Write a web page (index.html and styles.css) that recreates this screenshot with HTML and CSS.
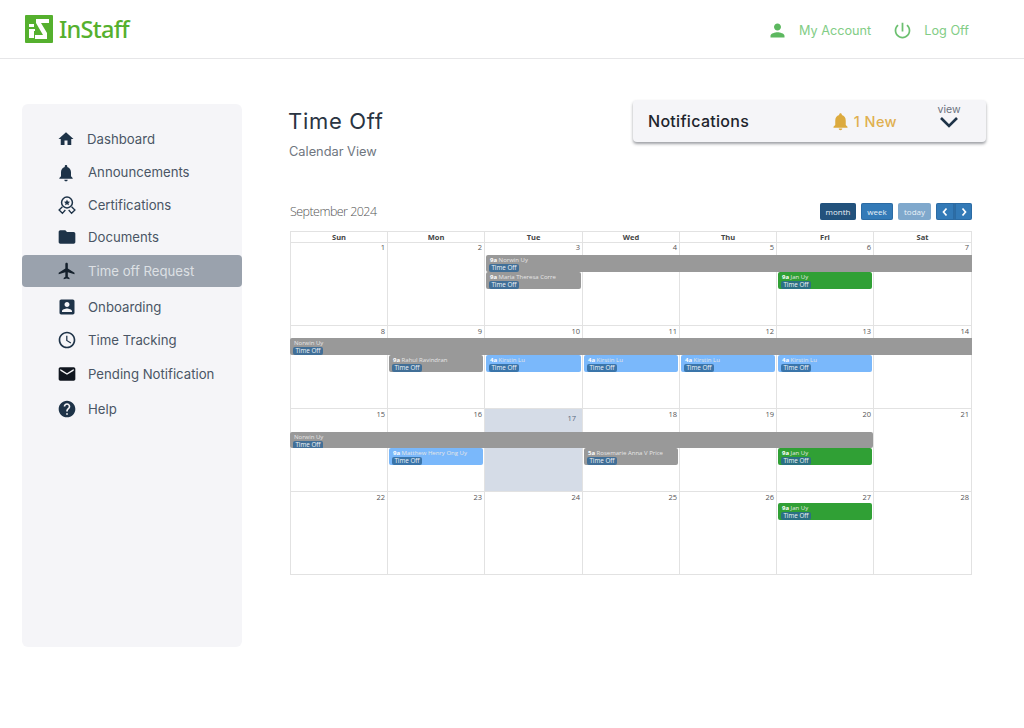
FILE: index.html
```html
<!DOCTYPE html>
<html lang="en">
<head>
<meta charset="utf-8">
<title>InStaff - Time Off</title>
<link rel="stylesheet" href="styles.css">
</head>
<body>
<header class="topbar">
  <a class="brand">
    <svg class="brand-mark" viewBox="0 0 28 28"><rect width="28" height="28" rx="1" fill="#55b02e"/><path d="M4 9h5v3H4zM4 14h6v2H9v7H4z" fill="#fff"/><path d="M11 4h13v4h-8l6 10v6H10v-4h8L11 8z" fill="#fff"/></svg>
    <span class="brand-name">InStaff</span>
  </a>
  <nav class="top-links">
    <a class="top-link"><svg class="top-icon person" viewBox="0 0 24 24"><path d="M12 12c2.210 0 4-1.790 4-4s-1.790-4-4-4-4 1.790-4 4 1.790 4 4 4zm0 2c-2.670 0-8 1.340-8 4v2h16v-2c0-2.660-5.330-4-8-4z"/></svg>My Account</a>
    <a class="top-link"><svg class="top-icon" viewBox="0 0 24 24"><path d="M13 3h-2v10h2V3zm4.830 2.170l-1.420 1.420C17.990 7.860 19 9.810 19 12c0 3.870-3.130 7-7 7s-7-3.130-7-7c0-2.190 1.010-4.140 2.580-5.420L6.170 5.170C4.230 6.820 3 9.260 3 12c0 4.970 4.030 9 9 9s9-4.030 9-9c0-2.740-1.230-5.180-3.170-6.830z"/></svg>Log Off</a>
  </nav>
</header>

<div class="page">
  <aside class="sidebar">
    <a class="nav-item"><svg class="nav-icon nav-icon-small" viewBox="0 0 24 24"><path d="M10 20v-6h4v6h5v-8h3L12 3 2 12h3v8z"/></svg>Dashboard</a>
    <a class="nav-item"><svg class="nav-icon nav-icon-low" viewBox="0 0 24 24"><path d="M12 22c1.100 0 2-.9 2-2h-4c0 1.100.89 2 2 2zm6-6v-5c0-3.070-1.640-5.640-4.500-6.320V4c0-.83-.67-1.500-1.500-1.500s-1.500.67-1.500 1.500v.68C7.630 5.360 6 7.920 6 11v5l-2 2v1h16v-1l-2-2z"/></svg>Announcements</a>
    <a class="nav-item"><svg class="nav-icon" viewBox="0 0 24 24"><circle cx="12" cy="9" r="6.500" fill="none" stroke="#1e3348" stroke-width="1.800"/><path d="M12 5.500l1.100 2.300 2.500.3-1.800 1.700.5 2.500-2.300-1.200-2.300 1.200.5-2.500-1.800-1.700 2.500-.3z"/><path d="M6.500 14l-4 4 4 4 3.500-4M17.500 14l4 4-4 4-3.500-4" fill="none" stroke="#1e3348" stroke-width="1.600"/></svg>Certifications</a>
    <a class="nav-item nav-tight"><svg class="nav-icon" viewBox="0 0 24 24"><path d="M10 4H4c-1.100 0-1.990.9-1.990 2L2 18c0 1.100.9 2 2 2h16c1.100 0 2-.9 2-2V8c0-1.100-.9-2-2-2h-8l-2-2z"/></svg>Documents</a>
    <a class="nav-item nav-active"><svg class="nav-icon" viewBox="0 0 24 24"><path d="M21 16v-2l-8-5V3.500c0-.83-.67-1.500-1.500-1.500S10 2.670 10 3.500V9l-8 5v2l8-2.500V19l-2 1.500V22l3.500-1 3.500 1v-1.500L13 19v-5.500l8 2.500z"/></svg>Time off Request</a>
    <a class="nav-item nav-after-active"><svg class="nav-icon" viewBox="0 0 24 24"><path d="M3 5v14c0 1.100.89 2 2 2h14c1.100 0 2-.9 2-2V5c0-1.100-.9-2-2-2H5c-1.110 0-2 .9-2 2zm12 4c0 1.660-1.340 3-3 3s-3-1.340-3-3 1.340-3 3-3 3 1.340 3 3zm-9 8c0-2 4-3.100 6-3.100s6 1.100 6 3.100v1H6v-1z"/></svg>Onboarding</a>
    <a class="nav-item"><svg class="nav-icon" viewBox="0 0 24 24"><path d="M11.990 2C6.470 2 2 6.480 2 12s4.470 10 9.990 10C17.520 22 22 17.520 22 12S17.520 2 11.990 2zM12 20c-4.420 0-8-3.580-8-8s3.580-8 8-8 8 3.580 8 8-3.580 8-8 8zm.5-13H11v6l5.250 3.150.75-1.230-4.500-2.670z"/></svg>Time Tracking</a>
    <a class="nav-item nav-gap1"><svg class="nav-icon nav-icon-black" viewBox="0 0 24 24"><path d="M20 4H4c-1.100 0-1.990.9-1.990 2L2 18c0 1.100.9 2 2 2h16c1.100 0 2-.9 2-2V6c0-1.100-.9-2-2-2zm0 4l-8 5-8-5V6l8 5 8-5v2z"/></svg>Pending Notification</a>
    <a class="nav-item nav-gap2"><svg class="nav-icon" viewBox="0 0 24 24"><path d="M12 2C6.480 2 2 6.480 2 12s4.480 10 10 10 10-4.480 10-10S17.520 2 12 2zm1 17h-2v-2h2v2zm2.070-7.750l-.9.92C13.450 12.900 13 13.500 13 15h-2v-.5c0-1.100.45-2.100 1.170-2.830l1.240-1.260c.37-.36.59-.86.59-1.410 0-1.100-.9-2-2-2s-2 .9-2 2H8c0-2.210 1.790-4 4-4s4 1.790 4 4c0 .88-.36 1.680-.93 2.250z"/></svg>Help</a>
  </aside>

  <main class="content">
    <div class="heading-row">
      <div class="titles">
        <h1 class="title">Time Off</h1>
        <p class="subtitle">Calendar View</p>
      </div>
      <section class="notif">
        <span class="notif-title">Notifications</span>
        <span class="notif-new"><svg class="notif-bell" viewBox="0 0 24 24"><path d="M12 22c1.100 0 2-.9 2-2h-4c0 1.100.89 2 2 2zm6-6v-5c0-3.070-1.640-5.640-4.500-6.320V4c0-.83-.67-1.500-1.500-1.500s-1.500.67-1.500 1.500v.68C7.630 5.360 6 7.920 6 11v5l-2 2v1h16v-1l-2-2z"/></svg>1 New</span>
        <span class="notif-view">view<svg class="notif-chevron" viewBox="0 0 20 12"><path d="M2 2l8 8 8-8" fill="none" stroke="#1e3348" stroke-width="2.600"/></svg></span>
      </section>
    </div>

    <div class="cal-toolbar">
      <span class="cal-month">September 2024</span>
      <div class="cal-buttons">
        <button class="cal-btn cal-btn-active">month</button>
        <button class="cal-btn">week</button>
        <button class="cal-btn cal-btn-disabled">today</button>
        <div class="cal-pager">
          <button class="cal-btn cal-arrow"><svg viewBox="0 0 8 10"><path d="M5.500 1.500L2.500 5l3 3.500" fill="none" stroke="#fff" stroke-width="1.700"/></svg></button>
          <button class="cal-btn cal-arrow"><svg viewBox="0 0 8 10"><path d="M2.500 1.500L5.500 5l-3 3.500" fill="none" stroke="#fff" stroke-width="1.700"/></svg></button>
        </div>
      </div>
    </div>

    <div class="calendar">
      <div class="cal-head">
        <span>Sun</span><span>Mon</span><span>Tue</span><span>Wed</span><span>Thu</span><span>Fri</span><span>Sat</span>
      </div>

      <div class="week">
        <div class="day c1">1</div><div class="day c2">2</div><div class="day c3">3</div><div class="day c4">4</div><div class="day c5">5</div><div class="day c6">6</div><div class="day c7">7</div>
        <div class="ev ev-gray r1 from3 to8"><p><b>9a</b> Norwin Uy</p><span class="tag">Time Off</span></div>
        <div class="ev ev-gray r2 from3 to4"><p><b>9a</b> Maria Theresa Corre</p><span class="tag">Time Off</span></div>
        <div class="ev ev-green r2 from6 to7"><p><b>9a</b> Jan Uy</p><span class="tag">Time Off</span></div>
      </div>

      <div class="week week-two">
        <div class="day c1">8</div><div class="day c2">9</div><div class="day c3">10</div><div class="day c4">11</div><div class="day c5">12</div><div class="day c6">13</div><div class="day c7">14</div>
        <div class="ev ev-gray ev-flat r1 from1 to8"><p>Norwin Uy</p><span class="tag">Time Off</span></div>
        <div class="ev ev-gray r2 from2 to3"><p><b>9a</b> Rahul Ravindran</p><span class="tag">Time Off</span></div>
        <div class="ev ev-blue r2 from3 to4"><p><b>4a</b> Kirstin Lu</p><span class="tag">Time Off</span></div>
        <div class="ev ev-blue r2 from4 to5"><p><b>4a</b> Kirstin Lu</p><span class="tag">Time Off</span></div>
        <div class="ev ev-blue r2 from5 to6"><p><b>4a</b> Kirstin Lu</p><span class="tag">Time Off</span></div>
        <div class="ev ev-blue r2 from6 to7"><p><b>4a</b> Kirstin Lu</p><span class="tag">Time Off</span></div>
      </div>

      <div class="week week-three">
        <div class="day c1">15</div><div class="day c2">16</div><div class="day c3 day-today">17</div><div class="day c4">18</div><div class="day c5">19</div><div class="day c6">20</div><div class="day c7">21</div>
        <div class="ev ev-gray ev-flat r1 from1 to7"><p>Norwin Uy</p><span class="tag">Time Off</span></div>
        <div class="ev ev-blue r2 from2 to3"><p><b>9a</b> Matthew Henry Ong Uy</p><span class="tag">Time Off</span></div>
        <div class="ev ev-gray r2 from4 to5"><p><b>5a</b> Rosemarie Anna V Price</p><span class="tag">Time Off</span></div>
        <div class="ev ev-green r2 from6 to7"><p><b>9a</b> Jan Uy</p><span class="tag">Time Off</span></div>
      </div>

      <div class="week week-four">
        <div class="day c1">22</div><div class="day c2">23</div><div class="day c3">24</div><div class="day c4">25</div><div class="day c5">26</div><div class="day c6">27</div><div class="day c7">28</div>
        <div class="ev ev-green r1 from6 to7"><p><b>9a</b> Jan Uy</p><span class="tag">Time Off</span></div>
      </div>
    </div>
  </main>
</div>
</body>
</html>
```
FILE: styles.css
```css
* { box-sizing: border-box; }
html, body { margin: 0; padding: 0; }
body {
  width: 1024px;
  height: 728px;
  overflow: hidden;
  background: #fff;
  font-family: "Inter", "Liberation Sans", sans-serif;
  color: #3f4a5a;
}
p, h1 { margin: 0; }

/* top bar */
.topbar {
  height: 59px;
  padding: 2px 55px 0 25px;
  display: flex;
  align-items: center;
  justify-content: space-between;
  border-bottom: 1px solid #e6e6e8;
}
.brand { display: flex; align-items: center; gap: 6px; margin-top: -2px; }
.brand-mark { width: 28px; height: 28px; display: block; }
.brand-name {
  font-family: "Noto Sans", sans-serif;
  font-size: 23.500px;
  font-weight: 500;
  letter-spacing: -0.75px;
  color: #55b02e;
  line-height: 28px;
}
.top-links { display: flex; align-items: center; gap: 21px; }
.top-link {
  display: flex;
  align-items: center;
  gap: 11px;
  font-size: 12.700px;
  color: #82cd86;
}
.top-icon { width: 21px; height: 21px; fill: #6cc070; display: block; }
.top-icon.person { fill: #5cb85f; }

/* page */
.page {
  display: flex;
  padding: 45px 38px 0 22px;
  gap: 47px;
}
.sidebar {
  flex: 0 0 220px;
  height: 543px;
  padding-top: 18px;
  background: #f5f5f8;
  border-radius: 6px;
  display: flex;
  flex-direction: column;
}
.nav-item {
  height: 33px;
  padding-left: 35px;
  display: flex;
  align-items: center;
  gap: 11px;
  font-size: 13.200px;
  color: #4a5565;
}
.nav-icon { width: 20px; height: 20px; flex: none; fill: #1e3348; display: block; }
.nav-icon-small { width: 18px; height: 18px; margin: 0 1px 0 0; }
.nav-icon-low { margin-top: 2px; margin-left: -1px; margin-right: 1px; }
.nav-icon-black { fill: #10161f; }
.nav-tight { margin-top: -1px; }
.nav-active {
  height: 32px;
  margin-top: 2px;
  background: #9aa2ad;
  border-radius: 4px;
  color: #dde0e4;
}
.nav-active .nav-icon { fill: #14202c; }
.nav-after-active { margin-top: 3px; }
.nav-gap1 { margin-top: 1px; }
.nav-gap2 { margin-top: 2px; }

/* main */
.content { flex: 1; min-width: 0; }
.heading-row { display: flex; justify-content: space-between; align-items: flex-start; height: 99px; }
.titles { padding-top: 3px; }
.title {
  margin-left: -1px;
  font-size: 22px;
  line-height: 28px;
  font-weight: 400;
  letter-spacing: 0.7px;
  color: #2a3442;
}
.subtitle { margin-top: 9px; font-size: 12.800px; line-height: 16px; color: #6f7680; }

.notif {
  width: 353px;
  height: 42px;
  margin-top: -4px;
  padding: 0 25px 0 15px;
  display: flex;
  align-items: center;
  background: #f5f5f8;
  border-radius: 4px;
  box-shadow: 0 2px 3px rgba(40, 45, 55, 0.45);
}
.notif-title { font-size: 16px; font-weight: 450; letter-spacing: 0.3px; color: #20242c; flex: 1; }
.notif-new {
  display: flex;
  align-items: center;
  gap: 3px;
  margin-right: 40px;
  font-size: 14.500px;
  font-weight: 450;
  letter-spacing: 0.4px;
  color: #e0b050;
}
.notif-bell { width: 21px; height: 21px; fill: #dcaa3e; display: block; }
.notif-view {
  width: 24px;
  height: 34px;
  display: flex;
  flex-direction: column;
  align-items: center;
  font-size: 10.500px;
  line-height: 11px;
  color: #6a717c;
}
.notif-chevron { width: 20px; height: 12px; margin-top: 1px; display: block; }

/* calendar toolbar */
.cal-toolbar {
  margin-right: 14px;
  height: 28px;
  display: flex;
  justify-content: space-between;
  align-items: flex-start;
}
.cal-month {
  font-family: "Open Sans", sans-serif;
  font-size: 12.500px;
  font-weight: 300;
  line-height: 17px;
  color: #555;
  margin-left: 1px;
  letter-spacing: -0.55px;
}
.cal-buttons { display: flex; gap: 5px; }
.cal-btn {
  height: 17px;
  padding: 0;
  width: 32px;
  border: 0;
  border-radius: 2px;
  background: #337ab7;
  box-shadow: inset 0 0 0 1px rgba(30, 80, 130, 0.35);
  color: #e9f1f7;
  font-family: "Open Sans", sans-serif;
  font-size: 8px;
  line-height: 17px;
  display: block;
}
.cal-btn-active { width: 36px; background: #23527c; }
.cal-btn-disabled { width: 33px; background: #7fa8cc; box-shadow: none; }
.cal-pager { display: flex; }
.cal-arrow { width: 18px; display: flex; align-items: center; justify-content: center; border-radius: 2px 0 0 2px; }
.cal-arrow + .cal-arrow { border-left: 1px solid #2e6da4; border-radius: 0 2px 2px 0; }
.cal-arrow svg { width: 8px; height: 10px; display: block; }

/* calendar grid */
.calendar {
  margin: 0 14px 0 1px;
  width: 682px;
  border: 1px solid #e2e2e2;
  border-width: 1px 0 0 1px;
  font-family: "Open Sans", sans-serif;
}
.cal-head, .week {
  display: grid;
  grid-template-columns: 97px 97px 98px 97px 97px 97px 98px;
}
.cal-head { height: 10px; }
.cal-head span {
  font-size: 7.500px;
  line-height: 10px;
  font-weight: 700;
  text-align: center;
  color: #444;
  border-right: 1px solid #e2e2e2;
  border-bottom: 1px solid #e2e2e2;
}
.week { grid-template-rows: 13px 17px 17px 1fr; height: 84px; }
.week-two { height: 83px; grid-template-rows: 12px 17px 17px 1fr; }
.week-three { height: 83px; grid-template-rows: 23px 16px 17px 1fr; }
.week-four { height: 83px; grid-template-rows: 11px 17px 1fr; }
.day {
  grid-row: 1 / -1;
  border-right: 1px solid #e2e2e2;
  border-bottom: 1px solid #e2e2e2;
  font-size: 7.500px;
  line-height: 10px;
  padding: 0 2px 0 0;
  text-align: right;
  color: #555;
}
.day-today { background: #d5dce7; padding: 4px 6px 0 0; color: #5a6a80; }
.c1 { grid-column: 1; } .c2 { grid-column: 2; } .c3 { grid-column: 3; } .c4 { grid-column: 4; }
.c5 { grid-column: 5; } .c6 { grid-column: 6; } .c7 { grid-column: 7; }
.r1 { grid-row: 2; } .r2 { grid-row: 3; }
.from1 { grid-column-start: 1; } .from2 { grid-column-start: 2; } .from3 { grid-column-start: 3; }
.from4 { grid-column-start: 4; } .from5 { grid-column-start: 5; } .from6 { grid-column-start: 6; }
.to3 { grid-column-end: 3; } .to4 { grid-column-end: 4; } .to5 { grid-column-end: 5; }
.to6 { grid-column-end: 6; } .to7 { grid-column-end: 7; } .to8 { grid-column-end: 8; }

.ev {
  margin: 0 2px 0 1px;
  padding: 1px 3px 0;
  overflow: hidden;
  border-radius: 2px;
  color: #e6e6e6;
  font-size: 6px;
  line-height: 8px;
  white-space: nowrap;
}
.ev p { height: 8px; padding-left: 1px; }
.ev b { font-weight: 700; color: #fff; }
.ev-gray { background: #999; }
.ev-blue { background: #7ab8fb; }
.ev-green { background: #30a035; }
.ev.to8 { margin-right: 0; border-radius: 2px 0 0 2px; }
.ev-flat { margin-left: -1px; margin-right: 1px; padding-left: 3px; }
.tag {
  display: block;
  width: 30px;
  height: 8px;
  line-height: 8px;
  font-size: 6.300px;
  text-align: center;
  color: #eef3f8;
  background: rgba(42, 100, 150, 0.8);
  border-radius: 2px;
}
```
